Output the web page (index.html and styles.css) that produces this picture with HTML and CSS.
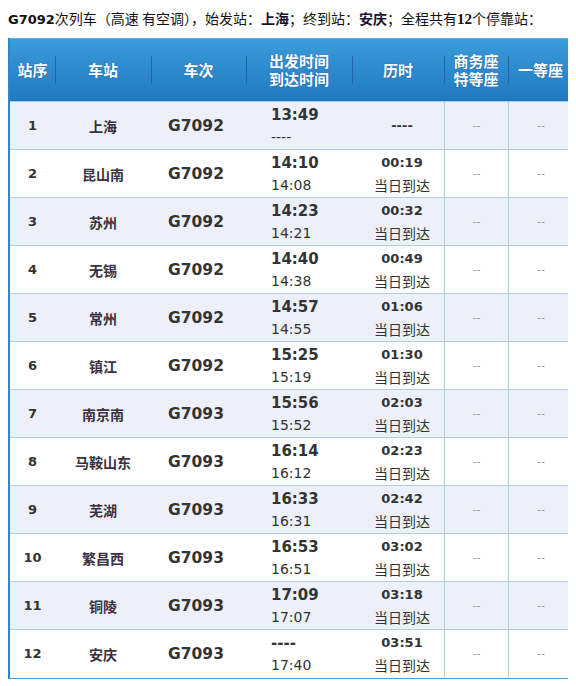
FILE: index.html
```html
<!DOCTYPE html>
<html lang="zh-CN">
<head>
<meta charset="utf-8">
<title>G7092 停靠站</title>
<link rel="stylesheet" href="styles.css">
</head>
<body>
<p class="title"><b class="tn">G7092</b>次列车（高速 有空调），始发站：<b class="st">上海</b>；终到站：<b class="st">安庆</b>；全程共有<b class="num">12</b>个停靠站：</p>
<div class="tbl">
  <div class="row head">
    <div class="h">站序</div>
    <div class="h">车站</div>
    <div class="h">车次</div>
    <div class="h"><span>出发时间</span><span>到达时间</span></div>
    <div class="h">历时</div>
    <div class="h"><span>商务座</span><span>特等座</span></div>
    <div class="h">一等座</div>
    <div class="h">二等座</div>
  </div>

  <div class="row odd">
    <div class="c no">1</div><div class="c name">上海</div><div class="c train">G7092</div>
    <div class="c time"><span class="dep">13:49</span><span class="arr">----</span></div>
    <div class="c dur"><span class="d">----</span></div>
    <div class="c seat">--</div><div class="c seat">--</div><div class="c seat">--</div>
  </div>
  <div class="row">
    <div class="c no">2</div><div class="c name">昆山南</div><div class="c train">G7092</div>
    <div class="c time"><span class="dep">14:10</span><span class="arr">14:08</span></div>
    <div class="c dur"><span class="d">00:19</span><span class="day">当日到达</span></div>
    <div class="c seat">--</div><div class="c seat">--</div><div class="c seat">--</div>
  </div>
  <div class="row odd">
    <div class="c no">3</div><div class="c name">苏州</div><div class="c train">G7092</div>
    <div class="c time"><span class="dep">14:23</span><span class="arr">14:21</span></div>
    <div class="c dur"><span class="d">00:32</span><span class="day">当日到达</span></div>
    <div class="c seat">--</div><div class="c seat">--</div><div class="c seat">--</div>
  </div>
  <div class="row">
    <div class="c no">4</div><div class="c name">无锡</div><div class="c train">G7092</div>
    <div class="c time"><span class="dep">14:40</span><span class="arr">14:38</span></div>
    <div class="c dur"><span class="d">00:49</span><span class="day">当日到达</span></div>
    <div class="c seat">--</div><div class="c seat">--</div><div class="c seat">--</div>
  </div>
  <div class="row odd">
    <div class="c no">5</div><div class="c name">常州</div><div class="c train">G7092</div>
    <div class="c time"><span class="dep">14:57</span><span class="arr">14:55</span></div>
    <div class="c dur"><span class="d">01:06</span><span class="day">当日到达</span></div>
    <div class="c seat">--</div><div class="c seat">--</div><div class="c seat">--</div>
  </div>
  <div class="row">
    <div class="c no">6</div><div class="c name">镇江</div><div class="c train">G7092</div>
    <div class="c time"><span class="dep">15:25</span><span class="arr">15:19</span></div>
    <div class="c dur"><span class="d">01:30</span><span class="day">当日到达</span></div>
    <div class="c seat">--</div><div class="c seat">--</div><div class="c seat">--</div>
  </div>
  <div class="row odd">
    <div class="c no">7</div><div class="c name">南京南</div><div class="c train">G7093</div>
    <div class="c time"><span class="dep">15:56</span><span class="arr">15:52</span></div>
    <div class="c dur"><span class="d">02:03</span><span class="day">当日到达</span></div>
    <div class="c seat">--</div><div class="c seat">--</div><div class="c seat">--</div>
  </div>
  <div class="row">
    <div class="c no">8</div><div class="c name">马鞍山东</div><div class="c train">G7093</div>
    <div class="c time"><span class="dep">16:14</span><span class="arr">16:12</span></div>
    <div class="c dur"><span class="d">02:23</span><span class="day">当日到达</span></div>
    <div class="c seat">--</div><div class="c seat">--</div><div class="c seat">--</div>
  </div>
  <div class="row odd">
    <div class="c no">9</div><div class="c name">芜湖</div><div class="c train">G7093</div>
    <div class="c time"><span class="dep">16:33</span><span class="arr">16:31</span></div>
    <div class="c dur"><span class="d">02:42</span><span class="day">当日到达</span></div>
    <div class="c seat">--</div><div class="c seat">--</div><div class="c seat">--</div>
  </div>
  <div class="row">
    <div class="c no">10</div><div class="c name">繁昌西</div><div class="c train">G7093</div>
    <div class="c time"><span class="dep">16:53</span><span class="arr">16:51</span></div>
    <div class="c dur"><span class="d">03:02</span><span class="day">当日到达</span></div>
    <div class="c seat">--</div><div class="c seat">--</div><div class="c seat">--</div>
  </div>
  <div class="row odd">
    <div class="c no">11</div><div class="c name">铜陵</div><div class="c train">G7093</div>
    <div class="c time"><span class="dep">17:09</span><span class="arr">17:07</span></div>
    <div class="c dur"><span class="d">03:18</span><span class="day">当日到达</span></div>
    <div class="c seat">--</div><div class="c seat">--</div><div class="c seat">--</div>
  </div>
  <div class="row last">
    <div class="c no">12</div><div class="c name">安庆</div><div class="c train">G7093</div>
    <div class="c time"><span class="dep">----</span><span class="arr">17:40</span></div>
    <div class="c dur"><span class="d">03:51</span><span class="day">当日到达</span></div>
    <div class="c seat">--</div><div class="c seat">--</div><div class="c seat">--</div>
  </div>
</div>
</body>
</html>
```

FILE: styles.css
```css
html, body {
  overflow: hidden;
}
body {
  margin: 8px;
  background: #fff;
  color: #333;
  font-family: "DejaVu Sans", "Noto Sans CJK SC", sans-serif;
}
.title {
  margin: 0 0 10px;
  height: 20px;
  line-height: 20px;
  font-size: 14px;
  color: #111;
  font-family: "Noto Sans CJK SC", sans-serif;
  white-space: nowrap;
}
.title .tn {
  font-family: "DejaVu Sans", sans-serif;
  font-size: 13px;
  font-weight: bold;
}
.title .st {
  font-weight: bold;
  color: #1a1030;
}
.title .num {
  font-family: "Liberation Serif", serif;
  font-size: 15px;
  font-weight: bold;
}
.tbl {
  width: max-content;
  border-left: 2px solid #2a88d0;
  border-bottom: 1px solid #4d9bd4;
}
.row {
  display: grid;
  grid-template-columns: 45px 96px 95px 106px 92px 64px 65px 64px;
  height: 47px;
  border-bottom: 1px solid #b3cde0;
  background: #fff;
}
.row.odd {
  background: #edf0f8;
}
.row.last {
  border-bottom: none;
  height: 48px;
}
.row.head {
  height: 63px;
  background: linear-gradient(#3c9cdb, #1f79bf);
  box-shadow: inset 0 1px 0 #62b2e6;
  border-bottom: 1px solid #a7cbe6;
}
.h {
  display: flex;
  flex-direction: column;
  align-items: center;
  justify-content: center;
  text-align: center;
  color: #fff;
  font-family: "Noto Sans CJK SC", sans-serif;
  font-weight: bold;
  font-size: 15px;
  line-height: 18px;
  white-space: nowrap;
  text-shadow: 0 0 1px rgba(40, 20, 90, 0.5);
}
.h span {
  display: block;
  height: 18px;
  overflow: visible;
}
.h + .h {
  background: linear-gradient(#2563a6, #2563a6) 0 50% / 1px 28px no-repeat;
}
.c {
  display: flex;
  flex-direction: column;
  align-items: center;
  justify-content: center;
  line-height: 22px;
}
.no {
  font-size: 13px;
  font-weight: bold;
}
.name {
  font-family: "Noto Sans CJK SC", sans-serif;
  font-size: 14px;
  font-weight: bold;
  color: #3a3040;
}
.train {
  font-size: 15.5px;
  font-weight: bold;
  padding-right: 5px;
}
.time {
  align-items: flex-start;
  padding-left: 25px;
}
.dep {
  font-size: 15px;
  font-weight: bold;
}
.arr {
  font-size: 14px;
}
.dur {
  padding-left: 8px;
}
.d {
  font-size: 13px;
  font-weight: bold;
}
.day {
  font-family: "Noto Sans CJK SC", sans-serif;
  font-size: 14px;
}
.seat {
  border-left: 1px solid #a9d0e4;
  color: #999;
  font-size: 11px;
}
```
